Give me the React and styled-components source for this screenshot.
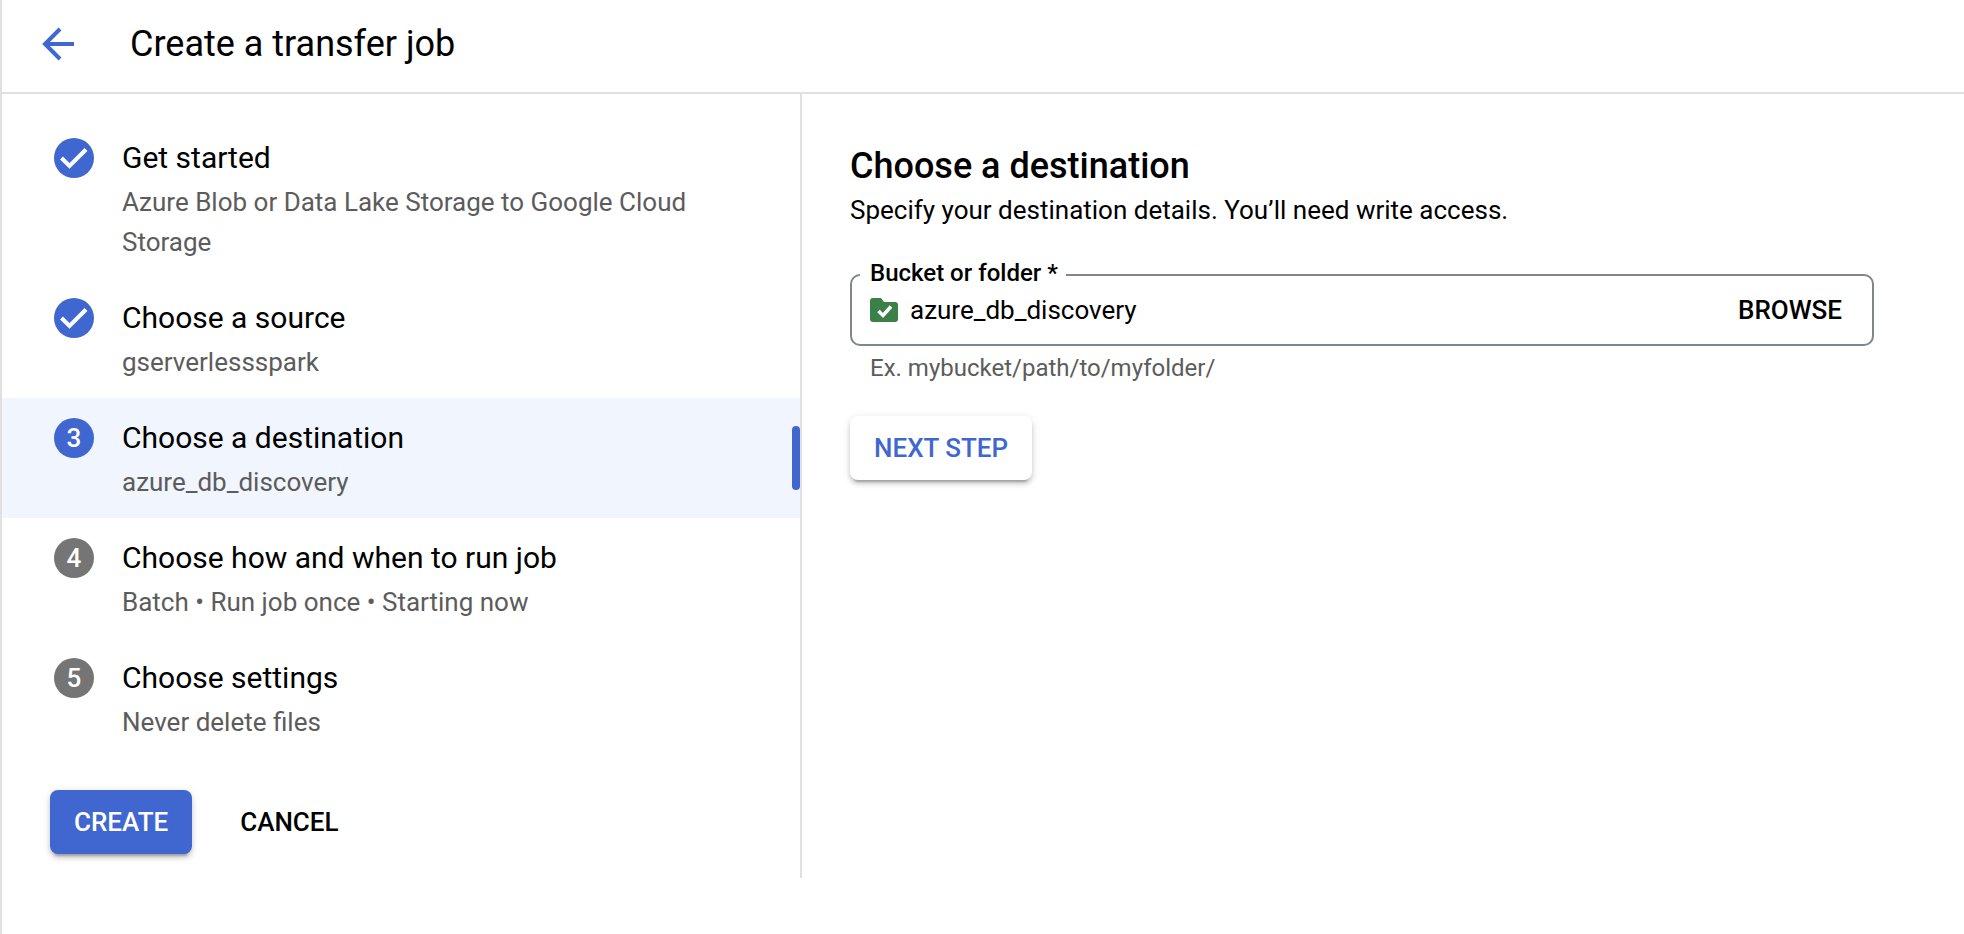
import React from "react";
import styled, { createGlobalStyle } from "styled-components";

const blue = "#4067d0";
const line = "#e0e0e0";
const muted = "#5c5c5c";

const GlobalStyle = createGlobalStyle`
  *, *::before, *::after { box-sizing: border-box; }
  body {
    margin: 0;
    background: #fff;
    color: #000;
    font-family: Roboto, "Liberation Sans", sans-serif;
    font-size: 26px;
    line-height: 40px;
  }
`;

const Page = styled.div`
  min-height: 100vh;
  border-left: 2px solid ${line};
`;

const Header = styled.header`
  display: flex;
  align-items: center;
  gap: 48px;
  height: 94px;
  padding: 0 32px 4px;
  border-bottom: 2px solid ${line};
`;

const BackLink = styled.a`
  display: flex;
  color: ${blue};
`;

const PageTitle = styled.h1`
  margin: 0;
  font-size: 36px;
  font-weight: 400;
  line-height: 40px;
`;

const Columns = styled.div`
  display: flex;
  align-items: stretch;
`;

const Sidebar = styled.nav`
  flex: 0 0 800px;
  padding: 24px 0;
  border-right: 2px solid ${line};
`;

const StepList = styled.ol`
  margin: 0;
  padding: 0;
  list-style: none;
`;

const Step = styled.li`
  position: relative;
  display: flex;
  gap: 28px;
  padding: 20px 80px 16px 52px;
  background: ${(p) => (p.$current ? "#f0f5fe" : "transparent")};

  &::after {
    content: "";
    display: ${(p) => (p.$current ? "block" : "none")};
    position: absolute;
    top: 28px;
    bottom: 28px;
    right: 0;
    width: 8px;
    border-radius: 4px;
    background: ${blue};
  }
`;

const StepBadge = styled.span`
  display: flex;
  flex: none;
  align-items: center;
  justify-content: center;
  width: 40px;
  height: 40px;
  border-radius: 50%;
  background: ${(p) => (p.$active ? blue : "#757575")};
  color: #fff;
  font-size: 26px;
  font-weight: 500;
`;

const StepTitle = styled.h2`
  margin: 0 0 4px;
  font-size: 30px;
  font-weight: 400;
  line-height: 40px;
`;

const StepSummary = styled.p`
  margin: 0;
  color: ${muted};
`;

const Actions = styled.div`
  display: flex;
  gap: 24px;
  padding: 32px 48px 0;
`;

const Button = styled.button`
  height: 64px;
  padding: 0 24px;
  border: 0;
  border-radius: 8px;
  background: ${(p) => (p.$fill ? blue : p.$raised ? "#fff" : "transparent")};
  color: ${(p) => (p.$fill ? "#fff" : p.$raised ? blue : "#000")};
  box-shadow: ${(p) =>
    p.$raised
      ? "0 6px 2px -4px rgba(0,0,0,.2), 0 4px 4px rgba(0,0,0,.14), 0 2px 10px rgba(0,0,0,.12)"
      : "none"};
  font-family: inherit;
  font-size: 26px;
  font-weight: 500;
  cursor: pointer;
`;

const Main = styled.main`
  flex: 1;
  min-width: 0;
  padding: 52px 48px;
`;

const Form = styled.form`
  max-width: 1024px;
`;

const SectionTitle = styled.h2`
  margin: 0;
  font-size: 36px;
  font-weight: 500;
  line-height: 40px;
`;

const Intro = styled.p`
  margin: 4px 0 28px;
`;

const Field = styled.fieldset`
  min-width: 0;
  margin: 0;
  padding: 0 8px 16px;
  border: 2px solid #80868b;
  border-radius: 10px;
`;

const Legend = styled.legend`
  padding: 0 8px 4px 10px;
  font-size: 24px;
  font-weight: 500;
  line-height: 30px;
`;

const FieldRow = styled.div`
  display: flex;
  align-items: center;
  gap: 12px;
  height: 36px;
  padding-left: 10px;
`;

const TextInput = styled.input`
  flex: 1;
  min-width: 0;
  height: 36px;
  padding: 0;
  border: 0;
  outline: 0;
  background: transparent;
  color: #000;
  font: inherit;
`;

const BrowseButton = styled(Button)`
  height: 36px;
  padding: 0 22px;
`;

const Hint = styled.p`
  margin: 2px 0 28px;
  padding-left: 20px;
  color: ${muted};
  font-size: 24px;
`;

const BackIcon = () => (
  <svg width="48" height="48" viewBox="0 0 48 48" fill="none" stroke="currentColor" strokeWidth="4" aria-hidden="true">
    <path d="M40 24H11" />
    <path d="M26 9L11 24l15 15" />
  </svg>
);

const CheckIcon = () => (
  <svg width="40" height="40" viewBox="0 0 40 40" fill="none" stroke="currentColor" strokeWidth="4" aria-hidden="true">
    <path d="M7.500 20l8 8L32 11.500" />
  </svg>
);

const FolderIcon = () => (
  <svg width="28" height="24" viewBox="0 0 28 24" aria-hidden="true">
    <path fill="#3a8048" d="M3 0h8l3 4h11a3 3 0 0 1 3 3v14a3 3 0 0 1-3 3H3a3 3 0 0 1-3-3V3a3 3 0 0 1 3-3z" />
    <path fill="none" stroke="#fff" strokeWidth="3.500" d="M8.500 13l4.500 4.500L21 8.500" />
  </svg>
);

const steps = [
  { title: "Get started", summary: "Azure Blob or Data Lake Storage to Google Cloud Storage", done: true },
  { title: "Choose a source", summary: "gserverlessspark", done: true },
  { title: "Choose a destination", summary: "azure_db_discovery", current: true },
  { title: "Choose how and when to run job", summary: "Batch • Run job once • Starting now" },
  { title: "Choose settings", summary: "Never delete files" },
];

export default function App() {
  return (
    <Page>
      <GlobalStyle />
      <Header>
        <BackLink href="#back" aria-label="Back">
          <BackIcon />
        </BackLink>
        <PageTitle>Create a transfer job</PageTitle>
      </Header>
      <Columns>
        <Sidebar aria-label="Steps">
          <StepList>
            {steps.map((s, i) => (
              <Step key={s.title} $current={s.current} aria-current={s.current ? "step" : undefined}>
                <StepBadge $active={s.done || s.current}>{s.done ? <CheckIcon /> : i + 1}</StepBadge>
                <div>
                  <StepTitle>{s.title}</StepTitle>
                  <StepSummary>{s.summary}</StepSummary>
                </div>
              </Step>
            ))}
          </StepList>
          <Actions>
            <Button type="button" $raised $fill>CREATE</Button>
            <Button type="button">CANCEL</Button>
          </Actions>
        </Sidebar>
        <Main>
          <Form onSubmit={(e) => e.preventDefault()}>
            <SectionTitle>Choose a destination</SectionTitle>
            <Intro>Specify your destination details. You’ll need write access.</Intro>
            <Field>
              <Legend>
                <label htmlFor="bucket">Bucket or folder *</label>
              </Legend>
              <FieldRow>
                <FolderIcon />
                <TextInput id="bucket" type="text" defaultValue="azure_db_discovery" aria-describedby="bucket-hint" required />
                <BrowseButton type="button">BROWSE</BrowseButton>
              </FieldRow>
            </Field>
            <Hint id="bucket-hint">Ex. mybucket/path/to/myfolder/</Hint>
            <Button type="submit" $raised>NEXT STEP</Button>
          </Form>
        </Main>
      </Columns>
    </Page>
  );
}
